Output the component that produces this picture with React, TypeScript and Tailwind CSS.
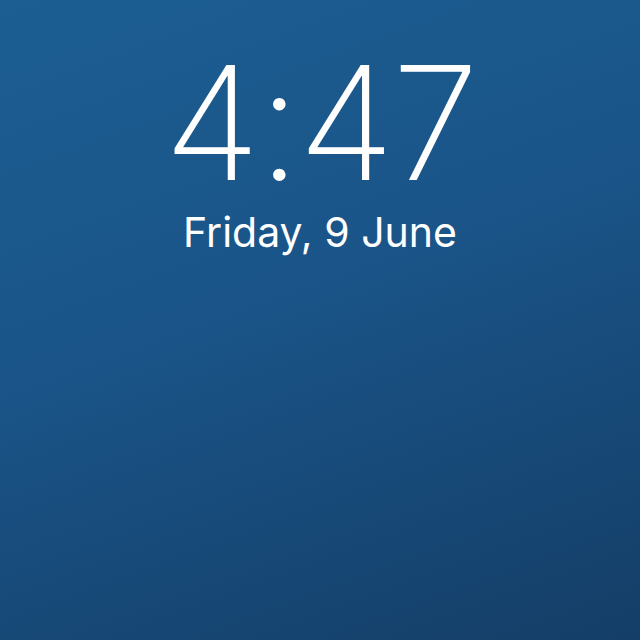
export default function App() {
  return (
    <div className="w-[640px] h-[640px] bg-[linear-gradient(160deg,#1c5e92_0%,#1a5488_45%,#143e67_100%)] flex flex-col items-center text-white font-['Inter','Liberation_Sans',sans-serif]">
      <div className="mt-[63px] text-[158px] leading-[120px] font-[170] tracking-[-3px]">4:47</div>
      <div className="mt-[29px] text-[41px] leading-[41px] font-normal">Friday, 9 June</div>
    </div>
  );
}
